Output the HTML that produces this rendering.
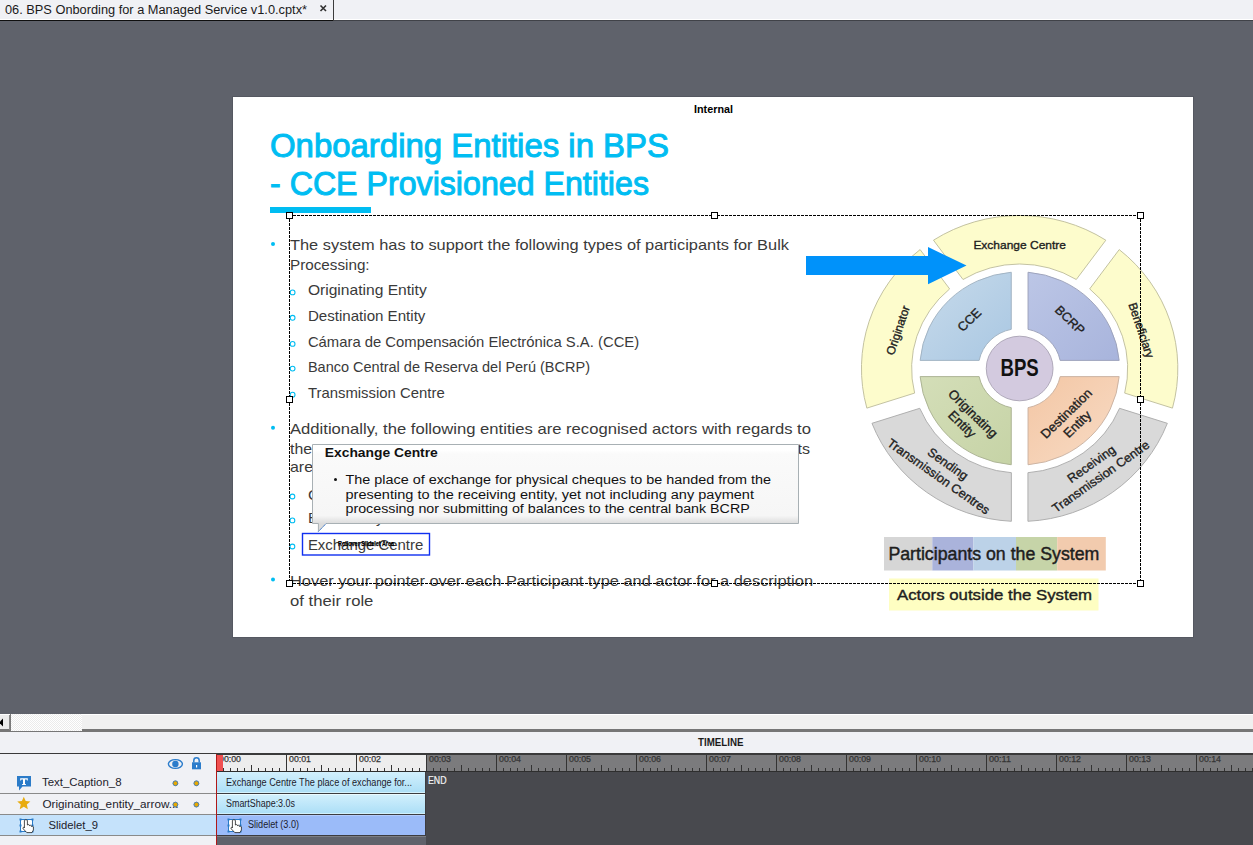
<!DOCTYPE html>
<html><head><meta charset="utf-8"><style>
html,body{margin:0;padding:0;width:1253px;height:845px;overflow:hidden;background:#5f626b;font-family:"Liberation Sans", sans-serif;}
svg{display:block;position:absolute;left:0;top:0;}
</style></head><body>
<svg width="1253" height="845" viewBox="0 0 1253 845" font-family='"Liberation Sans", sans-serif'><rect x="0" y="0" width="1253" height="845" fill="#5f626b"/>
<rect x="0" y="0" width="1253" height="20" fill="#f0f1f5"/>
<rect x="0" y="19" width="333" height="1" fill="#ffffff"/>
<rect x="0" y="20" width="334" height="1" fill="#101010"/>
<rect x="333" y="0" width="1" height="21" fill="#3c3c3c"/>
<rect x="334" y="0" width="919" height="20" fill="#f0f1f5"/>
<rect x="334" y="19" width="919" height="1" fill="#ffffff"/>
<rect x="334" y="20" width="919" height="1" fill="#404248"/>
<text x="5" y="14" font-size="12.5" fill="#1a1a1a" font-weight="normal" text-anchor="start" textLength="302" lengthAdjust="spacingAndGlyphs" >06. BPS Onbording for a Managed Service v1.0.cptx*</text>
<path d="M320.5 5.5 L326 11 M326 5.5 L320.5 11" stroke="#303030" stroke-width="1.6"/>
<rect x="232" y="96" width="962" height="542" fill="#555861"/>
<rect x="233" y="97" width="960" height="540" fill="#ffffff"/>
<text x="694" y="113" font-size="11.5" fill="#000" font-weight="bold" text-anchor="start" textLength="39" lengthAdjust="spacingAndGlyphs" >Internal</text>
<text x="270" y="157" font-size="33" fill="#00bdf2" font-weight="normal" text-anchor="start" textLength="399" lengthAdjust="spacingAndGlyphs" stroke="#00bdf2" stroke-width="1.0">Onboarding Entities in BPS</text>
<text x="270" y="194.6" font-size="33" fill="#00bdf2" font-weight="normal" text-anchor="start" textLength="379" lengthAdjust="spacingAndGlyphs" stroke="#00bdf2" stroke-width="1.0">- CCE Provisioned Entities</text>
<rect x="270" y="207" width="101" height="6" fill="#00bdf2"/>
<circle cx="273" cy="244" r="2" fill="#00bdf2"/>
<text x="290" y="250" font-size="15" fill="#3a3a3a" font-weight="normal" text-anchor="start" textLength="499" lengthAdjust="spacingAndGlyphs" >The system has to support the following types of participants for Bulk</text>
<text x="290" y="269.7" font-size="15" fill="#3a3a3a" font-weight="normal" text-anchor="start" textLength="79.6" lengthAdjust="spacingAndGlyphs" >Processing:</text>
<circle cx="292.6" cy="292.4" r="2.4" fill="none" stroke="#00bdf2" stroke-width="1.1"/>
<text x="307.9" y="295.4" font-size="15" fill="#3a3a3a" font-weight="normal" text-anchor="start" textLength="118.8" lengthAdjust="spacingAndGlyphs" >Originating Entity</text>
<circle cx="292.6" cy="317.8" r="2.4" fill="none" stroke="#00bdf2" stroke-width="1.1"/>
<text x="307.9" y="320.8" font-size="15" fill="#3a3a3a" font-weight="normal" text-anchor="start" textLength="117.5" lengthAdjust="spacingAndGlyphs" >Destination Entity</text>
<circle cx="292.6" cy="343.9" r="2.4" fill="none" stroke="#00bdf2" stroke-width="1.1"/>
<text x="307.9" y="346.9" font-size="15" fill="#3a3a3a" font-weight="normal" text-anchor="start" textLength="331.3" lengthAdjust="spacingAndGlyphs" >Cámara de Compensación Electrónica S.A. (CCE)</text>
<circle cx="292.6" cy="368.6" r="2.4" fill="none" stroke="#00bdf2" stroke-width="1.1"/>
<text x="307.9" y="371.6" font-size="15" fill="#3a3a3a" font-weight="normal" text-anchor="start" textLength="282.1" lengthAdjust="spacingAndGlyphs" >Banco Central de Reserva del Perú (BCRP)</text>
<circle cx="292.6" cy="394.7" r="2.4" fill="none" stroke="#00bdf2" stroke-width="1.1"/>
<text x="307.9" y="397.7" font-size="15" fill="#3a3a3a" font-weight="normal" text-anchor="start" textLength="136.8" lengthAdjust="spacingAndGlyphs" >Transmission Centre</text>
<circle cx="273" cy="427.8" r="2" fill="#00bdf2"/>
<text x="290" y="433.9" font-size="15" fill="#3a3a3a" font-weight="normal" text-anchor="start" textLength="521" lengthAdjust="spacingAndGlyphs" >Additionally, the following entities are recognised  actors with regards to</text>
<text x="290" y="453.5" font-size="15" fill="#3a3a3a" font-weight="normal" text-anchor="start" textLength="22" lengthAdjust="spacingAndGlyphs" >the</text>
<text x="797.5" y="453.5" font-size="15" fill="#3a3a3a" font-weight="normal" text-anchor="start" textLength="12.5" lengthAdjust="spacingAndGlyphs" >ts</text>
<text x="290" y="472.4" font-size="15" fill="#3a3a3a" font-weight="normal" text-anchor="start" textLength="390" lengthAdjust="spacingAndGlyphs" >are Originators, Beneficiaries and the Exchange Centre</text>
<circle cx="292.4" cy="496.5" r="2.4" fill="none" stroke="#00bdf2" stroke-width="1.1"/>
<text x="307.9" y="499.5" font-size="15" fill="#3a3a3a" font-weight="normal" text-anchor="start" textLength="70.8" lengthAdjust="spacingAndGlyphs" >Originator</text>
<circle cx="292.4" cy="520.4" r="2.4" fill="none" stroke="#00bdf2" stroke-width="1.1"/>
<text x="307.9" y="523.4" font-size="15" fill="#3a3a3a" font-weight="normal" text-anchor="start" textLength="75.8" lengthAdjust="spacingAndGlyphs" >Beneficiary</text>
<circle cx="292.4" cy="546.5" r="2.4" fill="none" stroke="#00bdf2" stroke-width="1.1"/>
<text x="307.9" y="549.5" font-size="15" fill="#3a3a3a" font-weight="normal" text-anchor="start" textLength="115.39999999999999" lengthAdjust="spacingAndGlyphs" >Exchange Centre</text>
<circle cx="273" cy="579.5" r="2" fill="#00bdf2"/>
<text x="290" y="585.5" font-size="15" fill="#3a3a3a" font-weight="normal" text-anchor="start" textLength="523" lengthAdjust="spacingAndGlyphs" >Hover your pointer over each Participant type and actor for a description</text>
<text x="290" y="605.5" font-size="15" fill="#3a3a3a" font-weight="normal" text-anchor="start" textLength="83.4" lengthAdjust="spacingAndGlyphs" >of their role</text>
<g transform="translate(1019.65 368.5) scale(1.034 1)">
<defs><linearGradient id="gcce" x1="0" y1="0" x2="1" y2="1"><stop offset="0" stop-color="#c8dbeb"/><stop offset="1" stop-color="#a9c7e2"/></linearGradient><linearGradient id="gbcrp" x1="0" y1="0" x2="1" y2="1"><stop offset="0" stop-color="#bcc6e6"/><stop offset="1" stop-color="#a8b4dc"/></linearGradient><linearGradient id="gorig" x1="0" y1="0" x2="1" y2="1"><stop offset="0" stop-color="#d4deb8"/><stop offset="1" stop-color="#c6d3a6"/></linearGradient><linearGradient id="gdest" x1="0" y1="0" x2="1" y2="1"><stop offset="0" stop-color="#f3c6a4"/><stop offset="1" stop-color="#f8dcc6"/></linearGradient></defs>
<path d="M-83.34 -128.31 A153 153 0 0 1 83.34 -128.31 L54.77 -89.00 A104.5 104.5 0 0 0 -54.77 -89.00 Z" fill="#fdfccc" stroke="#bdbc9a" stroke-width="0.9"/>
<path d="M96.28 -118.91 A153 153 0 0 1 147.78 39.61 L101.57 24.59 A104.5 104.5 0 0 0 67.72 -79.59 Z" fill="#fdfccc" stroke="#bdbc9a" stroke-width="0.9"/>
<path d="M142.84 54.82 A153 153 0 0 1 8.00 152.79 L8.00 104.19 A104.5 104.5 0 0 0 96.62 39.81 Z" fill="#d9d9d9" stroke="#aaaaaa" stroke-width="0.9"/>
<path d="M-8.00 152.79 A153 153 0 0 1 -142.84 54.82 L-96.62 39.81 A104.5 104.5 0 0 0 -8.00 104.19 Z" fill="#d9d9d9" stroke="#aaaaaa" stroke-width="0.9"/>
<path d="M-147.78 39.61 A153 153 0 0 1 -96.28 -118.91 L-67.72 -79.59 A104.5 104.5 0 0 0 -101.57 24.59 Z" fill="#fdfccc" stroke="#bdbc9a" stroke-width="0.9"/>
<path d="M-8.10 -96.26 A96.6 96.6 0 0 0 -96.26 -8.10 L-39.17 -8.10 A40 40 0 0 1 -8.10 -39.17 Z" fill="url(#gcce)" stroke="#9fb0c0" stroke-width="0.9"/>
<path d="M8.10 -96.26 A96.6 96.6 0 0 1 96.26 -8.10 L39.17 -8.10 A40 40 0 0 0 8.10 -39.17 Z" fill="url(#gbcrp)" stroke="#9aa0b8" stroke-width="0.9"/>
<path d="M-8.10 96.26 A96.6 96.6 0 0 1 -96.26 8.10 L-39.17 8.10 A40 40 0 0 0 -8.10 39.17 Z" fill="url(#gorig)" stroke="#a8b090" stroke-width="0.9"/>
<path d="M8.10 96.26 A96.6 96.6 0 0 0 96.26 8.10 L39.17 8.10 A40 40 0 0 1 8.10 39.17 Z" fill="url(#gdest)" stroke="#c8b0a0" stroke-width="0.9"/>
<circle cx="0" cy="0" r="32.3" fill="#d3cadf" stroke="#aaa3b5" stroke-width="0.9"/>
<g transform="translate(0.00 -125.00) rotate(0)">
<text x="0" y="5.18" font-size="11.6" fill="#1e1e1e" stroke="#1e1e1e" stroke-width="0.35" text-anchor="middle">Exchange Centre</text>
</g>
<g transform="translate(118.88 -38.63) rotate(72)">
<text x="0" y="5.18" font-size="11.6" fill="#1e1e1e" stroke="#1e1e1e" stroke-width="0.35" text-anchor="middle">Beneficiary</text>
</g>
<g transform="translate(73.18 100.72) rotate(-36)">
<text x="0" y="-2.32" font-size="12.3" fill="#1e1e1e" stroke="#1e1e1e" stroke-width="0.35" text-anchor="middle">Receiving</text>
<text x="0" y="13.18" font-size="12.3" fill="#1e1e1e" stroke="#1e1e1e" stroke-width="0.35" text-anchor="middle">Transmission Centre</text>
</g>
<g transform="translate(-73.18 100.72) rotate(36)">
<text x="0" y="-2.32" font-size="12.3" fill="#1e1e1e" stroke="#1e1e1e" stroke-width="0.35" text-anchor="middle">Sending</text>
<text x="0" y="13.18" font-size="12.3" fill="#1e1e1e" stroke="#1e1e1e" stroke-width="0.35" text-anchor="middle">Transmission Centres</text>
</g>
<g transform="translate(-118.88 -38.63) rotate(-72)">
<text x="0" y="5.18" font-size="11.6" fill="#1e1e1e" stroke="#1e1e1e" stroke-width="0.35" text-anchor="middle">Originator</text>
</g>
<g transform="translate(-49.50 -49.50) rotate(-45)">
<text x="0" y="5.50" font-size="12.5" fill="#1e1e1e" stroke="#1e1e1e" stroke-width="0.35" text-anchor="middle">CCE</text>
</g>
<g transform="translate(49.50 -49.50) rotate(45)">
<text x="0" y="5.50" font-size="12.5" fill="#1e1e1e" stroke="#1e1e1e" stroke-width="0.35" text-anchor="middle">BCRP</text>
</g>
<g transform="translate(-49.50 49.50) rotate(45)">
<text x="0" y="-1.89" font-size="12.8" fill="#1e1e1e" stroke="#1e1e1e" stroke-width="0.35" text-anchor="middle">Originating</text>
<text x="0" y="13.11" font-size="12.8" fill="#1e1e1e" stroke="#1e1e1e" stroke-width="0.35" text-anchor="middle">Entity</text>
</g>
<g transform="translate(49.50 49.50) rotate(-45)">
<text x="0" y="-1.89" font-size="12.8" fill="#1e1e1e" stroke="#1e1e1e" stroke-width="0.35" text-anchor="middle">Destination</text>
<text x="0" y="13.11" font-size="12.8" fill="#1e1e1e" stroke="#1e1e1e" stroke-width="0.35" text-anchor="middle">Entity</text>
</g>
<text x="0" y="7" font-size="23.5" font-weight="bold" fill="#111" text-anchor="middle" textLength="37" lengthAdjust="spacingAndGlyphs">BPS</text>
</g>
<path d="M806 256 H928 V247 L966.5 265.6 L928 284.3 V275 H806 Z" fill="#0092fa"/>
<rect x="884" y="537" width="48.3" height="33.5" fill="#d6d6d6"/>
<rect x="932.3" y="537" width="41.1" height="33.5" fill="#aab3db"/>
<rect x="973.4" y="537" width="42.6" height="33.5" fill="#bcd2e8"/>
<rect x="1016" y="537" width="41.2" height="33.5" fill="#c6d4a8"/>
<rect x="1057.2" y="537" width="48.6" height="33.5" fill="#f2cbae"/>
<text x="888.4" y="560" font-size="18" fill="#1e1e1e" font-weight="normal" text-anchor="start" textLength="211" lengthAdjust="spacingAndGlyphs" stroke="#1e1e1e" stroke-width="0.45">Participants on the System</text>
<rect x="889" y="578.5" width="209.5" height="32" fill="#fefec2"/>
<text x="897" y="600.4" font-size="15.5" fill="#1e1e1e" font-weight="normal" text-anchor="start" textLength="195" lengthAdjust="spacingAndGlyphs" stroke="#1e1e1e" stroke-width="0.4">Actors outside the System</text>
<path d="M289 215.5 H1141 M289 583.5 H1141 M289.5 215 V584 M1140.5 215 V584" fill="none" stroke="#000" stroke-width="1" stroke-dasharray="3 1"/>
<rect x="286.5" y="212.5" width="6" height="6" fill="#fff" stroke="#000" stroke-width="1"/>
<rect x="286.5" y="396.5" width="6" height="6" fill="#fff" stroke="#000" stroke-width="1"/>
<rect x="286.5" y="580.5" width="6" height="6" fill="#fff" stroke="#000" stroke-width="1"/>
<rect x="711.5" y="212.5" width="6" height="6" fill="#fff" stroke="#000" stroke-width="1"/>
<rect x="711.5" y="580.5" width="6" height="6" fill="#fff" stroke="#000" stroke-width="1"/>
<rect x="1137.5" y="212.5" width="6" height="6" fill="#fff" stroke="#000" stroke-width="1"/>
<rect x="1137.5" y="396.5" width="6" height="6" fill="#fff" stroke="#000" stroke-width="1"/>
<rect x="1137.5" y="580.5" width="6" height="6" fill="#fff" stroke="#000" stroke-width="1"/>
<rect x="302.5" y="533.5" width="127" height="21.5" fill="none" stroke="#1030f0" stroke-width="1.4"/>
<text x="338" y="546.2" font-size="7" font-weight="bold" fill="#000" stroke="#000" stroke-width="0.25" textLength="56" lengthAdjust="spacingAndGlyphs">Rollover Slidelet Area</text>
<defs><linearGradient id="gtt" gradientUnits="userSpaceOnUse" x1="0" y1="444.5" x2="0" y2="523.5"><stop offset="0" stop-color="#ffffff"/><stop offset="0.07" stop-color="#ffffff"/><stop offset="0.12" stop-color="#fafafa"/><stop offset="0.9" stop-color="#f6f6f6"/><stop offset="1" stop-color="#dcdcdc"/></linearGradient></defs>
<path d="M312.5 444.5 H798.5 V523.5 H326 L318.4 531.5 V523.5 H312.5 Z" fill="url(#gtt)" stroke="#a8b0b4" stroke-width="1"/>
<path d="M318.4 531.5 L326 523.8" stroke="#2a7af0" stroke-width="1" stroke-dasharray="1 1"/>
<text x="324.8" y="457" font-size="13" fill="#111" font-weight="bold" text-anchor="start" textLength="113" lengthAdjust="spacingAndGlyphs" >Exchange Centre</text>
<circle cx="335.5" cy="479.5" r="1.5" fill="#111"/>
<text x="345.5" y="484.2" font-size="12.5" fill="#111" font-weight="normal" text-anchor="start" textLength="425.5" lengthAdjust="spacingAndGlyphs" >The place of exchange for physical cheques to be handed from the</text>
<text x="345.5" y="498.8" font-size="12.5" fill="#111" font-weight="normal" text-anchor="start" textLength="408.5" lengthAdjust="spacingAndGlyphs" >presenting to the receiving entity, yet not including any payment</text>
<text x="345.5" y="512.6" font-size="12.5" fill="#111" font-weight="normal" text-anchor="start" textLength="404.2" lengthAdjust="spacingAndGlyphs" >processing nor submitting of balances to the central bank BCRP</text>
<rect x="0" y="714" width="1253" height="17" fill="#f0f0f0"/>
<rect x="0" y="714" width="1253" height="1" fill="#ffffff"/>
<rect x="0" y="729" width="1253" height="3" fill="#767676"/>
<rect x="0" y="715" width="10" height="14" fill="#ececec"/>
<rect x="9" y="715" width="1" height="15" fill="#8a8a8a"/>
<rect x="10" y="714" width="1" height="17" fill="#7a7a7a"/>
<path d="M-1 722.5 L3 718.5 V726.5 Z" fill="#000"/>
<defs><pattern id="chk" width="2" height="2" patternUnits="userSpaceOnUse"><rect width="2" height="2" fill="#ffffff"/><rect width="1" height="1" fill="#ebebeb"/><rect x="1" y="1" width="1" height="1" fill="#ebebeb"/></pattern></defs>
<rect x="11" y="714" width="71" height="17" fill="url(#chk)"/>
<rect x="0" y="732" width="1253" height="21" fill="#f0f1f5"/>
<text x="698" y="746" font-size="10" fill="#1a1a1a" font-weight="bold" text-anchor="start" textLength="45.5" lengthAdjust="spacingAndGlyphs" >TIMELINE</text>
<rect x="0" y="753" width="1253" height="1" fill="#3a3a3a"/>
<rect x="0" y="754" width="216" height="91" fill="#f0f1f5"/>
<ellipse cx="175.4" cy="764" rx="7" ry="4.4" fill="none" stroke="#2b7ccb" stroke-width="1.4"/>
<circle cx="175.4" cy="764" r="3.2" fill="#2b7ccb"/>
<path d="M193.8 762.5 V760.5 A2.7 2.7 0 0 1 199.2 760.5 V762.5" fill="none" stroke="#2b7ccb" stroke-width="1.5"/>
<rect x="192" y="762.3" width="9" height="7" fill="#2b7ccb"/>
<rect x="196" y="765" width="1.2" height="2.5" fill="#fff"/>
<rect x="0" y="793" width="216" height="1" fill="#8a8a8a"/>
<rect x="0" y="814" width="216" height="1" fill="#8a8a8a"/>
<rect x="0" y="815" width="216" height="20" fill="#c5e2fb"/>
<rect x="0" y="835" width="216" height="1" fill="#8a8a8a"/>
<circle cx="175.4" cy="783.3" r="2.3" fill="#e8a800" stroke="#4878a8" stroke-width="0.8"/>
<circle cx="196.4" cy="783.3" r="2.3" fill="#e8a800" stroke="#4878a8" stroke-width="0.8"/>
<circle cx="175.4" cy="804.6" r="2.3" fill="#e8a800" stroke="#4878a8" stroke-width="0.8"/>
<circle cx="196.4" cy="804.6" r="2.3" fill="#e8a800" stroke="#4878a8" stroke-width="0.8"/>
<path d="M17 776 H31 V786.5 H22.5 L19 790.5 V786.5 H17 Z" fill="#2b7bc8"/>
<path d="M20.2 778.2 H27.8 V780.6 H27 L26.6 779.6 H25 V784 H25.9 V784.9 H22.1 V784 H23 V779.6 H21.4 L21 780.6 H20.2 Z" fill="#fff"/>
<polygon points="23.80,796.70 25.68,801.01 30.36,801.47 26.84,804.59 27.86,809.18 23.80,806.80 19.74,809.18 20.76,804.59 17.24,801.47 21.92,801.01" fill="#e8ac10"/>
<rect x="20.5" y="819.5" width="12" height="12" fill="#fff" stroke="#2b7bc8" stroke-width="1"/>
<rect x="19.5" y="818.5" width="2" height="2" fill="#2b7bc8"/>
<rect x="19.5" y="824.5" width="2" height="2" fill="#2b7bc8"/>
<rect x="19.5" y="830.5" width="2" height="2" fill="#2b7bc8"/>
<rect x="31.5" y="818.5" width="2" height="2" fill="#2b7bc8"/>
<rect x="31.5" y="824.5" width="2" height="2" fill="#2b7bc8"/>
<rect x="31.5" y="830.5" width="2" height="2" fill="#2b7bc8"/>
<path transform="translate(22 819)" d="M2.4 1.4 Q3.9 -0.4 5.4 1.4 V6 Q6.4 5 7.4 6 V6.6 Q8.4 5.8 9.4 6.8 V7.4 Q10.4 6.8 11.4 7.8 V11 L10 13.6 H4.8 L1.2 9.8 Q0.5 8.6 1.6 8.2 L2.4 9 Z" fill="#fff" stroke="#111" stroke-width="0.75"/>
<text x="42" y="786" font-size="11" fill="#1c1c2c" font-weight="normal" text-anchor="start" textLength="79.5" lengthAdjust="spacingAndGlyphs" >Text_Caption_8</text>
<text x="42.5" y="807.7" font-size="11" fill="#1c1c2c" font-weight="normal" text-anchor="start" textLength="136" lengthAdjust="spacingAndGlyphs" >Originating_entity_arrow...</text>
<circle cx="175.4" cy="783.3" r="2.4" fill="#e8a800" stroke="#4a7fb0" stroke-width="0.9"/>
<circle cx="196.4" cy="783.3" r="2.4" fill="#e8a800" stroke="#4a7fb0" stroke-width="0.9"/>
<circle cx="175.4" cy="804.6" r="2.4" fill="#e8a800" stroke="#4a7fb0" stroke-width="0.9"/>
<circle cx="196.4" cy="804.6" r="2.4" fill="#e8a800" stroke="#4a7fb0" stroke-width="0.9"/>
<text x="48.5" y="828.7" font-size="11" fill="#1c1c2c" font-weight="normal" text-anchor="start" textLength="49.5" lengthAdjust="spacingAndGlyphs" >Slidelet_9</text>
<rect x="216" y="754" width="1037" height="91" fill="#48494e"/>
<rect x="217" y="755" width="209" height="16" fill="#ededed"/>
<rect x="426" y="755" width="827" height="16" fill="#7b7b7d"/>
<rect x="216" y="771" width="1037" height="1" fill="#2e2e2e"/>
<rect x="216" y="754" width="1037" height="1" fill="#3a3a3a"/>
<rect x="216" y="755" width="1" height="16" fill="#333"/>
<rect x="223" y="768" width="1" height="3" fill="#333"/>
<rect x="230" y="768" width="1" height="3" fill="#333"/>
<rect x="237" y="768" width="1" height="3" fill="#333"/>
<rect x="244" y="768" width="1" height="3" fill="#333"/>
<rect x="251" y="765" width="1" height="6" fill="#333"/>
<rect x="258" y="768" width="1" height="3" fill="#333"/>
<rect x="265" y="768" width="1" height="3" fill="#333"/>
<rect x="272" y="768" width="1" height="3" fill="#333"/>
<rect x="279" y="768" width="1" height="3" fill="#333"/>
<text x="219" y="761.6" font-size="9.5" fill="#333" font-weight="normal" text-anchor="start" textLength="22" lengthAdjust="spacingAndGlyphs" stroke="#333" stroke-width="0.25">00:00</text>
<rect x="286" y="755" width="1" height="16" fill="#333"/>
<rect x="293" y="768" width="1" height="3" fill="#333"/>
<rect x="300" y="768" width="1" height="3" fill="#333"/>
<rect x="307" y="768" width="1" height="3" fill="#333"/>
<rect x="314" y="768" width="1" height="3" fill="#333"/>
<rect x="321" y="765" width="1" height="6" fill="#333"/>
<rect x="328" y="768" width="1" height="3" fill="#333"/>
<rect x="335" y="768" width="1" height="3" fill="#333"/>
<rect x="342" y="768" width="1" height="3" fill="#333"/>
<rect x="349" y="768" width="1" height="3" fill="#333"/>
<text x="289" y="761.6" font-size="9.5" fill="#333" font-weight="normal" text-anchor="start" textLength="22" lengthAdjust="spacingAndGlyphs" stroke="#333" stroke-width="0.25">00:01</text>
<rect x="356" y="755" width="1" height="16" fill="#333"/>
<rect x="363" y="768" width="1" height="3" fill="#333"/>
<rect x="370" y="768" width="1" height="3" fill="#333"/>
<rect x="377" y="768" width="1" height="3" fill="#333"/>
<rect x="384" y="768" width="1" height="3" fill="#333"/>
<rect x="391" y="765" width="1" height="6" fill="#333"/>
<rect x="398" y="768" width="1" height="3" fill="#333"/>
<rect x="405" y="768" width="1" height="3" fill="#333"/>
<rect x="412" y="768" width="1" height="3" fill="#333"/>
<rect x="419" y="768" width="1" height="3" fill="#333"/>
<text x="359" y="761.6" font-size="9.5" fill="#333" font-weight="normal" text-anchor="start" textLength="22" lengthAdjust="spacingAndGlyphs" stroke="#333" stroke-width="0.25">00:02</text>
<rect x="426" y="755" width="1" height="16" fill="#333"/>
<rect x="433" y="768" width="1" height="3" fill="#333"/>
<rect x="440" y="768" width="1" height="3" fill="#333"/>
<rect x="447" y="768" width="1" height="3" fill="#333"/>
<rect x="454" y="768" width="1" height="3" fill="#333"/>
<rect x="461" y="765" width="1" height="6" fill="#333"/>
<rect x="468" y="768" width="1" height="3" fill="#333"/>
<rect x="475" y="768" width="1" height="3" fill="#333"/>
<rect x="482" y="768" width="1" height="3" fill="#333"/>
<rect x="489" y="768" width="1" height="3" fill="#333"/>
<text x="429" y="761.6" font-size="9.5" fill="#333" font-weight="normal" text-anchor="start" textLength="22" lengthAdjust="spacingAndGlyphs" stroke="#333" stroke-width="0.25">00:03</text>
<rect x="496" y="755" width="1" height="16" fill="#333"/>
<rect x="503" y="768" width="1" height="3" fill="#333"/>
<rect x="510" y="768" width="1" height="3" fill="#333"/>
<rect x="517" y="768" width="1" height="3" fill="#333"/>
<rect x="524" y="768" width="1" height="3" fill="#333"/>
<rect x="531" y="765" width="1" height="6" fill="#333"/>
<rect x="538" y="768" width="1" height="3" fill="#333"/>
<rect x="545" y="768" width="1" height="3" fill="#333"/>
<rect x="552" y="768" width="1" height="3" fill="#333"/>
<rect x="559" y="768" width="1" height="3" fill="#333"/>
<text x="499" y="761.6" font-size="9.5" fill="#333" font-weight="normal" text-anchor="start" textLength="22" lengthAdjust="spacingAndGlyphs" stroke="#333" stroke-width="0.25">00:04</text>
<rect x="566" y="755" width="1" height="16" fill="#333"/>
<rect x="573" y="768" width="1" height="3" fill="#333"/>
<rect x="580" y="768" width="1" height="3" fill="#333"/>
<rect x="587" y="768" width="1" height="3" fill="#333"/>
<rect x="594" y="768" width="1" height="3" fill="#333"/>
<rect x="601" y="765" width="1" height="6" fill="#333"/>
<rect x="608" y="768" width="1" height="3" fill="#333"/>
<rect x="615" y="768" width="1" height="3" fill="#333"/>
<rect x="622" y="768" width="1" height="3" fill="#333"/>
<rect x="629" y="768" width="1" height="3" fill="#333"/>
<text x="569" y="761.6" font-size="9.5" fill="#333" font-weight="normal" text-anchor="start" textLength="22" lengthAdjust="spacingAndGlyphs" stroke="#333" stroke-width="0.25">00:05</text>
<rect x="636" y="755" width="1" height="16" fill="#333"/>
<rect x="643" y="768" width="1" height="3" fill="#333"/>
<rect x="650" y="768" width="1" height="3" fill="#333"/>
<rect x="657" y="768" width="1" height="3" fill="#333"/>
<rect x="664" y="768" width="1" height="3" fill="#333"/>
<rect x="671" y="765" width="1" height="6" fill="#333"/>
<rect x="678" y="768" width="1" height="3" fill="#333"/>
<rect x="685" y="768" width="1" height="3" fill="#333"/>
<rect x="692" y="768" width="1" height="3" fill="#333"/>
<rect x="699" y="768" width="1" height="3" fill="#333"/>
<text x="639" y="761.6" font-size="9.5" fill="#333" font-weight="normal" text-anchor="start" textLength="22" lengthAdjust="spacingAndGlyphs" stroke="#333" stroke-width="0.25">00:06</text>
<rect x="706" y="755" width="1" height="16" fill="#333"/>
<rect x="713" y="768" width="1" height="3" fill="#333"/>
<rect x="720" y="768" width="1" height="3" fill="#333"/>
<rect x="727" y="768" width="1" height="3" fill="#333"/>
<rect x="734" y="768" width="1" height="3" fill="#333"/>
<rect x="741" y="765" width="1" height="6" fill="#333"/>
<rect x="748" y="768" width="1" height="3" fill="#333"/>
<rect x="755" y="768" width="1" height="3" fill="#333"/>
<rect x="762" y="768" width="1" height="3" fill="#333"/>
<rect x="769" y="768" width="1" height="3" fill="#333"/>
<text x="709" y="761.6" font-size="9.5" fill="#333" font-weight="normal" text-anchor="start" textLength="22" lengthAdjust="spacingAndGlyphs" stroke="#333" stroke-width="0.25">00:07</text>
<rect x="776" y="755" width="1" height="16" fill="#333"/>
<rect x="783" y="768" width="1" height="3" fill="#333"/>
<rect x="790" y="768" width="1" height="3" fill="#333"/>
<rect x="797" y="768" width="1" height="3" fill="#333"/>
<rect x="804" y="768" width="1" height="3" fill="#333"/>
<rect x="811" y="765" width="1" height="6" fill="#333"/>
<rect x="818" y="768" width="1" height="3" fill="#333"/>
<rect x="825" y="768" width="1" height="3" fill="#333"/>
<rect x="832" y="768" width="1" height="3" fill="#333"/>
<rect x="839" y="768" width="1" height="3" fill="#333"/>
<text x="779" y="761.6" font-size="9.5" fill="#333" font-weight="normal" text-anchor="start" textLength="22" lengthAdjust="spacingAndGlyphs" stroke="#333" stroke-width="0.25">00:08</text>
<rect x="846" y="755" width="1" height="16" fill="#333"/>
<rect x="853" y="768" width="1" height="3" fill="#333"/>
<rect x="860" y="768" width="1" height="3" fill="#333"/>
<rect x="867" y="768" width="1" height="3" fill="#333"/>
<rect x="874" y="768" width="1" height="3" fill="#333"/>
<rect x="881" y="765" width="1" height="6" fill="#333"/>
<rect x="888" y="768" width="1" height="3" fill="#333"/>
<rect x="895" y="768" width="1" height="3" fill="#333"/>
<rect x="902" y="768" width="1" height="3" fill="#333"/>
<rect x="909" y="768" width="1" height="3" fill="#333"/>
<text x="849" y="761.6" font-size="9.5" fill="#333" font-weight="normal" text-anchor="start" textLength="22" lengthAdjust="spacingAndGlyphs" stroke="#333" stroke-width="0.25">00:09</text>
<rect x="916" y="755" width="1" height="16" fill="#333"/>
<rect x="923" y="768" width="1" height="3" fill="#333"/>
<rect x="930" y="768" width="1" height="3" fill="#333"/>
<rect x="937" y="768" width="1" height="3" fill="#333"/>
<rect x="944" y="768" width="1" height="3" fill="#333"/>
<rect x="951" y="765" width="1" height="6" fill="#333"/>
<rect x="958" y="768" width="1" height="3" fill="#333"/>
<rect x="965" y="768" width="1" height="3" fill="#333"/>
<rect x="972" y="768" width="1" height="3" fill="#333"/>
<rect x="979" y="768" width="1" height="3" fill="#333"/>
<text x="919" y="761.6" font-size="9.5" fill="#333" font-weight="normal" text-anchor="start" textLength="22" lengthAdjust="spacingAndGlyphs" stroke="#333" stroke-width="0.25">00:10</text>
<rect x="986" y="755" width="1" height="16" fill="#333"/>
<rect x="993" y="768" width="1" height="3" fill="#333"/>
<rect x="1000" y="768" width="1" height="3" fill="#333"/>
<rect x="1007" y="768" width="1" height="3" fill="#333"/>
<rect x="1014" y="768" width="1" height="3" fill="#333"/>
<rect x="1021" y="765" width="1" height="6" fill="#333"/>
<rect x="1028" y="768" width="1" height="3" fill="#333"/>
<rect x="1035" y="768" width="1" height="3" fill="#333"/>
<rect x="1042" y="768" width="1" height="3" fill="#333"/>
<rect x="1049" y="768" width="1" height="3" fill="#333"/>
<text x="989" y="761.6" font-size="9.5" fill="#333" font-weight="normal" text-anchor="start" textLength="22" lengthAdjust="spacingAndGlyphs" stroke="#333" stroke-width="0.25">00:11</text>
<rect x="1056" y="755" width="1" height="16" fill="#333"/>
<rect x="1063" y="768" width="1" height="3" fill="#333"/>
<rect x="1070" y="768" width="1" height="3" fill="#333"/>
<rect x="1077" y="768" width="1" height="3" fill="#333"/>
<rect x="1084" y="768" width="1" height="3" fill="#333"/>
<rect x="1091" y="765" width="1" height="6" fill="#333"/>
<rect x="1098" y="768" width="1" height="3" fill="#333"/>
<rect x="1105" y="768" width="1" height="3" fill="#333"/>
<rect x="1112" y="768" width="1" height="3" fill="#333"/>
<rect x="1119" y="768" width="1" height="3" fill="#333"/>
<text x="1059" y="761.6" font-size="9.5" fill="#333" font-weight="normal" text-anchor="start" textLength="22" lengthAdjust="spacingAndGlyphs" stroke="#333" stroke-width="0.25">00:12</text>
<rect x="1126" y="755" width="1" height="16" fill="#333"/>
<rect x="1133" y="768" width="1" height="3" fill="#333"/>
<rect x="1140" y="768" width="1" height="3" fill="#333"/>
<rect x="1147" y="768" width="1" height="3" fill="#333"/>
<rect x="1154" y="768" width="1" height="3" fill="#333"/>
<rect x="1161" y="765" width="1" height="6" fill="#333"/>
<rect x="1168" y="768" width="1" height="3" fill="#333"/>
<rect x="1175" y="768" width="1" height="3" fill="#333"/>
<rect x="1182" y="768" width="1" height="3" fill="#333"/>
<rect x="1189" y="768" width="1" height="3" fill="#333"/>
<text x="1129" y="761.6" font-size="9.5" fill="#333" font-weight="normal" text-anchor="start" textLength="22" lengthAdjust="spacingAndGlyphs" stroke="#333" stroke-width="0.25">00:13</text>
<rect x="1196" y="755" width="1" height="16" fill="#333"/>
<rect x="1203" y="768" width="1" height="3" fill="#333"/>
<rect x="1210" y="768" width="1" height="3" fill="#333"/>
<rect x="1217" y="768" width="1" height="3" fill="#333"/>
<rect x="1224" y="768" width="1" height="3" fill="#333"/>
<rect x="1231" y="765" width="1" height="6" fill="#333"/>
<rect x="1238" y="768" width="1" height="3" fill="#333"/>
<rect x="1245" y="768" width="1" height="3" fill="#333"/>
<rect x="1252" y="768" width="1" height="3" fill="#333"/>
<rect x="1259" y="768" width="1" height="3" fill="#333"/>
<text x="1199" y="761.6" font-size="9.5" fill="#333" font-weight="normal" text-anchor="start" textLength="22" lengthAdjust="spacingAndGlyphs" stroke="#333" stroke-width="0.25">00:14</text>
<rect x="1266" y="755" width="1" height="16" fill="#333"/>
<rect x="1273" y="768" width="1" height="3" fill="#333"/>
<rect x="1280" y="768" width="1" height="3" fill="#333"/>
<rect x="1287" y="768" width="1" height="3" fill="#333"/>
<rect x="1294" y="768" width="1" height="3" fill="#333"/>
<rect x="1301" y="765" width="1" height="6" fill="#333"/>
<rect x="1308" y="768" width="1" height="3" fill="#333"/>
<rect x="1315" y="768" width="1" height="3" fill="#333"/>
<rect x="1322" y="768" width="1" height="3" fill="#333"/>
<rect x="1329" y="768" width="1" height="3" fill="#333"/>
<text x="1269" y="761.6" font-size="9.5" fill="#333" font-weight="normal" text-anchor="start" textLength="22" lengthAdjust="spacingAndGlyphs" stroke="#333" stroke-width="0.25">00:15</text>
<defs><linearGradient id="gbar" x1="0" y1="0" x2="0" y2="1"><stop offset="0" stop-color="#d2f0fd"/><stop offset="1" stop-color="#abdef6"/></linearGradient></defs>
<rect x="216" y="772" width="210" height="64" fill="#3c3c40"/>
<rect x="217" y="772" width="208" height="21" fill="url(#gbar)"/>
<rect x="217" y="794" width="208" height="20" fill="url(#gbar)"/>
<rect x="217" y="815" width="208" height="20" fill="#9bbbf9"/>
<rect x="216" y="836" width="210" height="9" fill="#5f626b"/>
<rect x="217" y="792" width="208" height="1" fill="#d4f2fd"/>
<rect x="217" y="794" width="208" height="1" fill="#eafaff"/>
<rect x="217" y="813" width="208" height="1" fill="#d0f0fc"/>
<rect x="217" y="815" width="208" height="1" fill="#b4ccfc"/>
<rect x="216" y="836" width="210" height="1" fill="#7c7e84"/>
<text x="226" y="786" font-size="10" fill="#1c1c2c" font-weight="normal" text-anchor="start" textLength="186" lengthAdjust="spacingAndGlyphs" >Exchange Centre  The place of exchange for...</text>
<text x="226" y="807" font-size="10" fill="#1c1c2c" font-weight="normal" text-anchor="start" textLength="69" lengthAdjust="spacingAndGlyphs" >SmartShape:3.0s</text>
<rect x="228.5" y="819.5" width="12" height="12" fill="#fff" stroke="#2b7bc8" stroke-width="1"/>
<rect x="227.5" y="818.5" width="2" height="2" fill="#2b7bc8"/>
<rect x="227.5" y="824.5" width="2" height="2" fill="#2b7bc8"/>
<rect x="227.5" y="830.5" width="2" height="2" fill="#2b7bc8"/>
<rect x="239.5" y="818.5" width="2" height="2" fill="#2b7bc8"/>
<rect x="239.5" y="824.5" width="2" height="2" fill="#2b7bc8"/>
<rect x="239.5" y="830.5" width="2" height="2" fill="#2b7bc8"/>
<path transform="translate(230 819)" d="M2.4 1.4 Q3.9 -0.4 5.4 1.4 V6 Q6.4 5 7.4 6 V6.6 Q8.4 5.8 9.4 6.8 V7.4 Q10.4 6.8 11.4 7.8 V11 L10 13.6 H4.8 L1.2 9.8 Q0.5 8.6 1.6 8.2 L2.4 9 Z" fill="#fff" stroke="#111" stroke-width="0.75"/>
<text x="248" y="827.5" font-size="10" fill="#1c1c2c" font-weight="normal" text-anchor="start" textLength="51" lengthAdjust="spacingAndGlyphs" >Slidelet (3.0)</text>
<text x="428" y="784" font-size="10" fill="#f4f4f4" font-weight="normal" text-anchor="start" textLength="18.5" lengthAdjust="spacingAndGlyphs" stroke="#f4f4f4" stroke-width="0.2">END</text>
<rect x="216" y="755" width="7" height="16" fill="#f05050"/>
<rect x="216" y="754" width="1" height="91" fill="#b01818"/></svg>
</body></html>
